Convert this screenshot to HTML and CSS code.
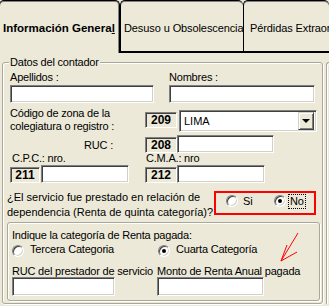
FILE: index.html
```html
<!DOCTYPE html>
<html>
<head>
    <title>Información General</title>
    <meta charset="utf-8">
    <link rel="stylesheet" href="styles.css">
</head>
<body>
    <div class="tabs">
        <div class="tab tab-active">Información Genera<u>l</u></div>
        <div class="tab tab-second">Desuso u Obsolescencia</div>
        <div class="tab tab-third">Pérdidas Extraordinarias</div>
    </div>

    <div class="panel">
        <fieldset class="group">
            <legend>Datos del contador</legend>
            <div class="group-body">
                <!-- apellidos / nombres -->
                <div class="row">
                    <div class="field field-apellidos">
                        <div class="label">Apellidos :</div>
                        <input type="text" class="text w-apellidos">
                    </div>
                    <div class="field">
                        <div class="label">Nombres :</div>
                        <input type="text" class="text w-nombres">
                    </div>
                </div>

                <!-- zona de colegiatura -->
                <div class="row row-zona">
                    <div class="zona-label">Código de zona de la<br>colegiatura o registro :</div>
                    <div class="code code-zona">209</div>
                    <div class="combo">
                        <span class="combo-text">LIMA</span>
                        <span class="combo-button"><span class="combo-arrow"></span></span>
                    </div>
                </div>

                <div class="row row-ruc">
                    <div class="ruc-label">RUC :</div>
                    <div class="code code-ruc">208</div>
                    <input type="text" class="text w-ruc">
                </div>

                <div class="row row-nro-labels">
                    <span class="nro-label">C.P.C.: nro.</span>
                    <span>C.M.A.: nro</span>
                </div>
                <div class="row row-nro">
                    <div class="code code-small">211</div>
                    <input type="text" class="text w-nro nro-cpc">
                    <div class="code code-cma">212</div>
                    <input type="text" class="text w-nro">
                </div>

                <!-- relación de dependencia -->
                <div class="row row-question">
                    <div class="question">¿El servicio fue prestado en relación de<br>dependencia (Renta de quinta categoría)?</div>
                    <div class="choice">
                        <div class="option option-si">
                            <span class="radio"></span>
                            <span class="option-text">Si</span>
                        </div>
                        <div class="option">
                            <span class="radio radio-on"></span>
                            <span class="option-text focus">No</span>
                        </div>
                    </div>
                </div>

                <div class="renta">
                    <div class="renta-title">Indique la categoría de Renta pagada:</div>
                    <div class="row renta-options">
                        <div class="option option-tercera">
                            <span class="radio"></span>
                            <span class="option-text">Tercera Categoria</span>
                        </div>
                        <div class="option">
                            <span class="radio radio-on"></span>
                            <span class="option-text">Cuarta Categoría</span>
                        </div>
                    </div>
                    <div class="row">
                        <div class="field field-prestador">
                            <div class="label renta-label">RUC del prestador de servicio</div>
                            <input type="text" class="text renta-input w-prestador">
                        </div>
                        <div class="field">
                            <div class="label renta-label">Monto de Renta Anual pagada</div>
                            <input type="text" class="text renta-input w-monto">
                        </div>
                    </div>
                </div>
            </div>
        </fieldset>
        <div class="side"></div>
    </div>

    <!-- flecha roja dibujada encima -->
    <svg class="arrow" width="329" height="306" viewBox="0 0 329 306">
        <path d="M298 233 L281 261 M281 261 L297 252 M281 261 L287 245" stroke="#f00" stroke-width="1" fill="none"/>
    </svg>
</body>
</html>
```

FILE: styles.css
```css
body {
    margin: 0;
    width: 329px;
    height: 306px;
    overflow: hidden;
    position: relative;
    background-color: #ece9d8;
    font-family: "Liberation Sans", Arial, sans-serif;
    font-size: 11px;
    letter-spacing: -0.2px;
    line-height: 15px;
    color: #000;
}

/* pestañas */
.tabs {
    display: flex;
    height: 53px;
}

.tab {
    box-sizing: border-box;
    height: 53px;
    padding-top: 20px;
    border: 1px solid #000;
    border-right: none;
    border-bottom: 2px solid #000;
    border-radius: 5px 5px 0 0;
    box-shadow: inset 0 1px #808080;
    white-space: nowrap;
    overflow: hidden;
    letter-spacing: -0.1px;
}

.tab-active {
    margin-left: -1px;
    width: 121px;
    padding-left: 3px;
    border-right: 1px solid #000;
    border-bottom: none;
    box-shadow: inset 0 1px #808080, inset -1px 0 #808080;
    font-size: 11.5px;
    font-weight: bold;
    letter-spacing: 0;
}

.tab-second {
    width: 123px;
    padding-left: 3px;
}

.tab-third {
    flex: 1;
    padding-left: 6px;
}

/* marco principal */
.panel {
    display: flex;
    padding: 2px 0 0 2px;
}

.group {
    box-sizing: border-box;
    width: 321px;
    min-width: 0;
    margin: 0;
    padding: 0 0 2px 0;
    border: 1px solid #aca899;
    border-radius: 3px;
    box-shadow: inset 1px 1px #fff, 1px 1px #fff;
}

.group legend {
    margin-left: 6px;
    padding: 0 1px;
    line-height: 15px;
    background-color: #ece9d8;
}

.group-body {
    padding-left: 7px;
}

.side {
    flex: 1;
    margin: 7px 0 0 3px;
    border-top: 1px solid #aca899;
    border-left: 1px solid #aca899;
    border-radius: 3px 0 0 0;
    box-shadow: inset 1px 1px #fff;
}

.row {
    display: flex;
    align-items: flex-start;
}

.label {
    white-space: nowrap;
}

.field-apellidos {
    width: 159px;
}

/* cajas de texto */
.text {
    box-sizing: border-box;
    display: block;
    height: 18px;
    margin: 0;
    padding: 0 2px;
    border: 1px solid;
    border-color: #808080 #fff #fff #808080;
    box-shadow: inset 1px 1px #404040, inset -1px -1px #d4d0c8;
    background-color: #fff;
    font: inherit;
}

.w-apellidos { width: 144px; }
.w-nombres { width: 146px; }
.w-ruc { width: 97px; }
.w-nro { width: 88px; }

.code {
    box-sizing: border-box;
    width: 32px;
    height: 16px;
    border: 1px solid;
    border-color: #808080 #fff #fff #808080;
    box-shadow: inset 1px 1px #404040;
    font-size: 12px;
    font-weight: bold;
    line-height: 14px;
    letter-spacing: 0;
    text-align: center;
}

.row-zona {
    margin-top: 4px;
}

.zona-label {
    width: 135px;
    line-height: 13px;
    white-space: nowrap;
}

.code-zona {
    margin-top: 5px;
}

.combo {
    box-sizing: border-box;
    display: flex;
    align-items: center;
    width: 138px;
    height: 22px;
    margin: 3px 0 0 2px;
    padding: 1px 2px 1px 4px;
    border: 1px solid;
    border-color: #808080 #fff #fff #808080;
    box-shadow: inset 1px 1px #404040, inset -1px -1px #d4d0c8;
    background-color: #fff;
    letter-spacing: 0;
}

.combo-text {
    flex: 1;
}

.combo-button {
    box-sizing: border-box;
    display: flex;
    align-items: center;
    justify-content: center;
    width: 16px;
    height: 18px;
    border: 1px solid;
    border-color: #d4d0c8 #404040 #404040 #d4d0c8;
    box-shadow: inset 1px 1px #fff, inset -1px -1px #808080;
    background-color: #ece9d8;
}

.combo-arrow {
    width: 0;
    height: 0;
    border-left: 4px solid transparent;
    border-right: 4px solid transparent;
    border-top: 4px solid #000;
}

.row-ruc {
    margin-top: 2px;
}

.ruc-label {
    box-sizing: border-box;
    width: 135px;
    margin-top: 3px;
    padding-right: 32px;
    text-align: right;
}

.code-ruc {
    margin-top: 2px;
}

.row-nro-labels {
    margin-top: -1px;
    line-height: 13px;
}

.nro-label {
    box-sizing: border-box;
    width: 136px;
    padding-left: 2px;
}

.code-small {
    width: 30px;
    margin-top: 2px;
}

.nro-cpc {
    margin-left: 1px;
}

.code-cma {
    margin: 2px 0 0 16px;
}

/* pregunta */
.row-question {
    margin: 7px 0 0 -3px;
}

.question {
    width: 207px;
    white-space: nowrap;
    letter-spacing: 0;
}

.choice {
    box-sizing: border-box;
    display: flex;
    width: 102px;
    height: 24px;
    margin-top: 1px;
    padding: 2px 0 0 10px;
    border: 2px solid #f00;
}

.option {
    display: flex;
    align-items: flex-start;
    white-space: nowrap;
}

.option-si {
    width: 48px;
}

.option-text {
    margin-left: 5px;
    line-height: 13px;
}

.focus {
    margin-left: 3px;
    padding: 0 1px;
    outline: 1px dotted #000;
}

.radio {
    box-sizing: border-box;
    position: relative;
    width: 12px;
    height: 12px;
    flex: none;
    border-radius: 50%;
    border: 1px solid;
    border-color: #808080 #fff #fff #808080;
    box-shadow: inset 1px 1px #404040, inset -1px -1px #d4d0c8;
    background-color: #fff;
}

.radio-on::after {
    content: "";
    position: absolute;
    left: 3px;
    top: 3px;
    width: 4px;
    height: 4px;
    border-radius: 50%;
    background-color: #000;
}

/* renta pagada */
.renta {
    box-sizing: border-box;
    width: 313px;
    margin: 2px 0 0 -3px;
    padding: 6px 0 4px 4px;
    border: 1px solid #aca899;
    border-radius: 3px;
    box-shadow: inset 1px 1px #fff, 1px 1px #fff;
}

.renta-title {
    line-height: 13px;
    white-space: nowrap;
}

.renta-options {
    line-height: 15px;
}

.renta-options .radio {
    margin-top: 3px;
}

.renta-options .option-text {
    margin-left: 6px;
    line-height: 15px;
}

.option-tercera {
    width: 146px;
}

.renta-label {
    margin-top: 8px;
    line-height: 13px;
}

.renta-input {
    height: 19px;
    margin-top: -1px;
}

.field-prestador {
    width: 145px;
}

.w-prestador { width: 103px; }
.w-monto { width: 107px; }

.arrow {
    position: absolute;
    left: 0;
    top: 0;
    pointer-events: none;
}
```
